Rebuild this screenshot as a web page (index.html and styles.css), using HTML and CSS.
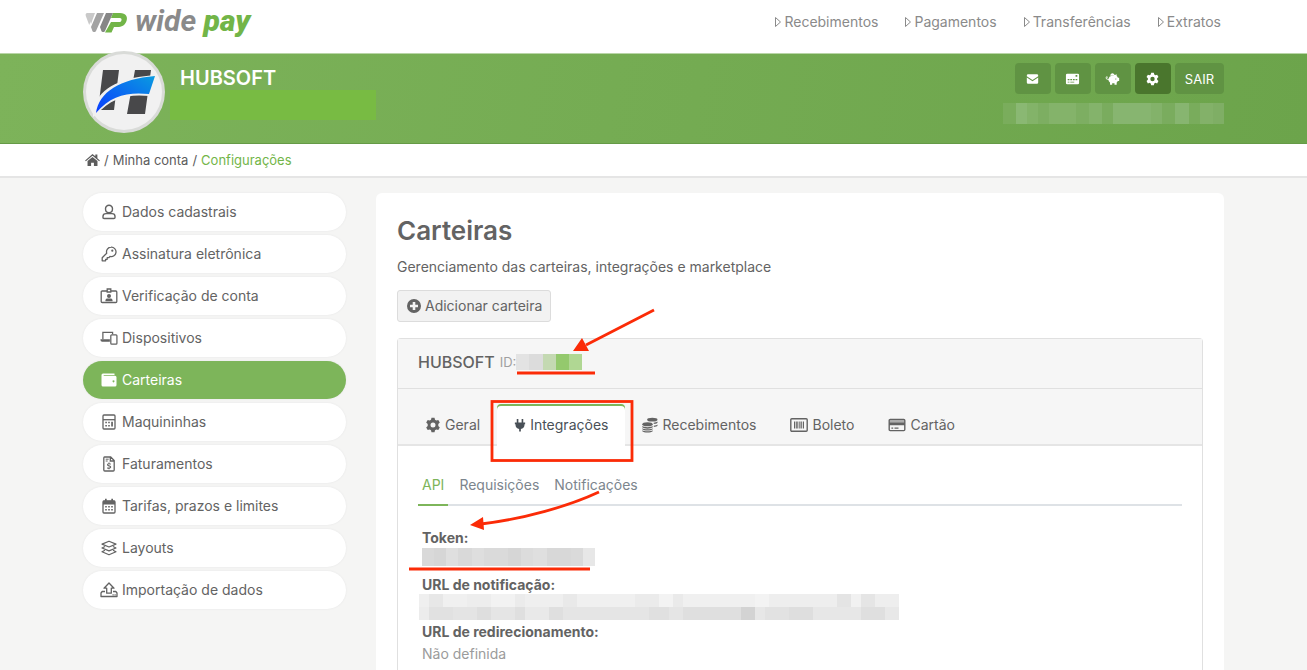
FILE: index.html
```html
<!DOCTYPE html>
<html lang="pt-BR">
<head>
<meta charset="utf-8">
<title>Wide Pay - Carteiras</title>
<meta name="viewport" content="width=device-width, initial-scale=1">
<link rel="stylesheet" href="styles.css">
</head>
<body>
<svg class="sprite" aria-hidden="true">
  <symbol id="play" viewBox="0 0 8 12"><path d="M1.500 1.500v9L6.500 6z" fill="none" stroke="currentColor" stroke-width="1"/></symbol>
  <symbol id="gear" viewBox="0 0 16 16"><path fill="currentColor" fill-rule="evenodd" d="M6.500.8h3l.5 2 1.300.8 2-.6 1.500 2.600-1.500 1.500v1.800l1.500 1.500-1.500 2.600-2-.6-1.300.8-.5 2h-3l-.5-2-1.300-.8-2 .6L1.200 10.400l1.500-1.500V7.100L1.200 5.600 2.700 3l2 .6L6 2.800zM8 5.500a2.500 2.500 0 1 0 0 5 2.500 2.500 0 0 0 0-5z"/></symbol>
  <symbol id="mail" viewBox="0 0 16 16"><path fill="currentColor" d="M3 2.500h10A1.500 1.500 0 0 1 14.500 4v.8L8 9 1.500 4.800V4A1.500 1.500 0 0 1 3 2.500zM1.500 6.300 8 10.500l6.500-4.200V12a1.500 1.500 0 0 1-1.500 1.500H3A1.500 1.500 0 0 1 1.500 12z"/></symbol>
  <symbol id="check" viewBox="0 0 16 16"><path fill="currentColor" fill-rule="evenodd" d="M2 2h12a1.500 1.500 0 0 1 1.500 1.500v9A1.500 1.500 0 0 1 14 14H2a1.500 1.500 0 0 1-1.500-1.500v-9A1.500 1.500 0 0 1 2 2zm9.500 1.500v2h2v-2zM2.500 8v1.500h2V8zm3 0v1.500h2V8zm3 0v1.500h2V8zm3 0v1.500h2V8zm-9 3v1h2v-1zm3 0v1H10v-1z"/></symbol>
  <symbol id="piggy" viewBox="0 0 18 16"><path fill="currentColor" fill-rule="evenodd" d="M6.500 2.800a2.500 2.500 0 0 1 4.800 0L12 3.200l2-.9v2.200c.7.500 1.200 1.200 1.500 2H17v4h-1.600c-.3.600-.8 1.200-1.400 1.600V15h-2.600v-2H8.600v2H6v-2.700A5 5 0 0 1 4 9C2 9 .8 8 .8 6.600.8 5.500 1.500 5 2.200 5c.8 0 1.300.6 1.100 1.500l-.7-.1c0-.4-.2-.6-.5-.6s-.5.300-.5.800c0 .9.900 1.400 2.500 1.400A5 5 0 0 1 8 4h2.800c-.6-.4-3.300-.4-4.300.3zM13 7.300a.7.700 0 1 0 .02 0z"/></symbol>
  <symbol id="home" viewBox="0 0 16 14"><path fill="currentColor" d="M8 .5l3 2.600V1.200h2.200v3.900L15.900 7.400l-.8 1L8 2.400l-7.100 6-.8-1zM8 3.700L13.300 8v5.500H9.500V9.800h-3v3.700H2.700V8z"/></symbol>
  <symbol id="user" viewBox="0 0 16 16"><g fill="none" stroke="currentColor" stroke-width="1.400"><path d="M8 1.300a3.500 3.500 0 0 1 3.500 3.500c0 2.200-1.500 3.900-3.500 3.900S4.500 7 4.500 4.800A3.500 3.500 0 0 1 8 1.300z"/><path d="M5 9.600h6c1.700 0 3 1.200 3 2.700v1.100c0 .7-.4 1.100-1.100 1.100H3.100c-.7 0-1.100-.4-1.100-1.100v-1.100c0-1.500 1.300-2.700 3-2.700z"/></g></symbol>
  <symbol id="key" viewBox="0 0 16 16"><path fill="none" stroke="currentColor" stroke-width="1.300" stroke-linejoin="round" d="M10 1.200a4.700 4.700 0 1 1-1 9.200l-1.200 1.300H6.200v1.600H4.600v1.500H1.200v-3.100l4.500-4.500A4.700 4.700 0 0 1 10 1.200z"/><circle cx="11.300" cy="4.700" r="1.100" fill="currentColor"/></symbol>
  <symbol id="badge" viewBox="0 0 18 16"><path fill="none" stroke="currentColor" stroke-width="1.300" d="M7 3H2.200c-.6 0-1 .4-1 1v9.500c0 .6.400 1 1 1h13.600c.6 0 1-.4 1-1V4c0-.6-.4-1-1-1H11M7.200 1h3.600v3H7.200z"/><circle cx="9" cy="8" r="2" fill="currentColor"/><path fill="currentColor" d="M5.500 13.300v-1.100c0-1.100.9-1.700 2-1.700h3c1.100 0 2 .6 2 1.700v1.100z"/></symbol>
  <symbol id="devices" viewBox="0 0 20 16"><g fill="none" stroke="currentColor" stroke-width="1.400"><path d="M3.200 9.500V1.700H14v2"/><rect x="12" y="4.600" width="6.800" height="10.200" rx="1"/></g><path fill="currentColor" d="M.5 9.500H11v2.800H2.500a2 2 0 0 1-2-2z"/></symbol>
  <symbol id="wallet" viewBox="0 0 16 16"><path fill="currentColor" fill-rule="evenodd" d="M2 1.500h11.500V3H2.700v.8H14a1.500 1.500 0 0 1 1.500 1.500V13a1.500 1.500 0 0 1-1.500 1.500H2A1.500 1.500 0 0 1 .5 13V3A1.500 1.500 0 0 1 2 1.500zm10.500 6.700a1 1 0 1 0 .02 0z"/></symbol>
  <symbol id="calc" viewBox="0 0 16 16"><rect x="2" y="1" width="12" height="14" rx="1" fill="none" stroke="currentColor" stroke-width="1.300"/><path d="M2 5.700h12" stroke="currentColor" stroke-width="1.300"/><path fill="currentColor" d="M4.300 7.700h1.600v1.600H4.300zM7.200 7.700h1.600v1.600H7.200zM4.300 11h1.600v1.600H4.300zM7.200 11h1.600v1.600H7.200zM10.200 7.700h1.700v4.900h-1.700z"/></symbol>
  <symbol id="invoice" viewBox="0 0 16 16"><path fill="none" stroke="currentColor" stroke-width="1.300" d="M3.500 1h6.200L13.200 4.500V14c0 .6-.3 1-1 1H3.800c-.6 0-1-.4-1-1V2c0-.6.100-1 .7-1zM9.300 1v4h4"/><path d="M4.700 3.200h3M4.700 5h2" stroke="currentColor" stroke-width="1"/><path fill="none" stroke="currentColor" stroke-width="1.100" d="M9.700 8.200C9 7.700 6.500 7.500 6.500 8.800c0 1.300 3.200.8 3.200 2.300 0 1.300-2.500 1.300-3.400.6M8 6.500v1M8 12.200v1"/></symbol>
  <symbol id="calendar" viewBox="0 0 16 16"><rect x="2" y="3" width="12" height="12" rx="1" fill="none" stroke="currentColor" stroke-width="1.300"/><path fill="currentColor" d="M2 2.800h12v3.600H2zM4 .7h1.700V3H4zM10.300.7H12V3h-1.700zM4.200 8h1.600v1.500H4.200zM7.200 8h1.600v1.500H7.200zM10.200 8h1.600v1.500h-1.600zM4.200 11h1.600v1.500H4.200zM7.200 11h1.600v1.500H7.200zM10.200 11h1.600v1.500h-1.600z"/></symbol>
  <symbol id="layers" viewBox="0 0 16 16"><g fill="none" stroke="currentColor" stroke-width="1.200" stroke-linejoin="round"><path d="M8 1.200l7 2.900-7 2.900-7-2.900z"/><path d="M4 6.500L1 8l7 2.900L15 8l-3-1.500"/><path d="M4 10.300l-3 1.500 7 3 7-3-3-1.500"/></g></symbol>
  <symbol id="upload" viewBox="0 0 18 16"><g fill="none" stroke="currentColor" stroke-width="1.300" stroke-linejoin="round"><path d="M9 1l5 5.200h-2.700v5H6.700v-5H4z"/><path d="M5 9.500H2.200L1 11v3.500h16V11l-1.200-1.500H13"/></g><path fill="currentColor" d="M12.500 12.300h1.200v1.200h-1.200zM14.500 12.300h1.200v1.200h-1.200z"/></symbol>
  <symbol id="plus" viewBox="0 0 16 16"><path fill="currentColor" fill-rule="evenodd" d="M8 1a7 7 0 1 1 0 14A7 7 0 0 1 8 1zM6.700 4v2.700H4v2.600h2.700V12h2.600V9.300H12V6.700H9.300V4z"/></symbol>
  <symbol id="plug" viewBox="0 0 14 16"><path fill="currentColor" d="M3.200 1h1.900v4H3.200zM8.900 1h1.900v4H8.900zM1 5.200h12V7h-.8v1.300A5 5 0 0 1 8 12.700V15.500H6v-2.800a5 5 0 0 1-4.200-4.400V7H1z"/></symbol>
  <symbol id="coins" viewBox="0 0 16 16"><g fill="currentColor"><ellipse cx="10.300" cy="2.700" rx="5.200" ry="1.900"/><ellipse cx="5.500" cy="7.200" rx="5.200" ry="2"/><path d="M.3 9c1.500 1.500 9 1.500 10.400 0v1.300c-1.500 1.800-9 1.800-10.400 0zM.3 11.200c1.500 1.500 9 1.500 10.400 0v1c-1.500 1.700-9 1.700-10.400 0zM.3 13.200c1.500 1.500 9 1.500 10.400 0v1c-1.500 1.700-9 1.700-10.400 0zM11.600 5.700c1.700 0 3-.4 3.900-1.100v1.100c-.6.800-2 1.200-3.700 1.200zM11.800 8.700c1.700-.1 3-.5 3.700-1.100v1.200c-.6.700-2 1.100-3.700 1.200z"/></g></symbol>
  <symbol id="barcode" viewBox="0 0 18 16"><rect x=".8" y="1.800" width="16.400" height="12.400" rx="1" fill="none" stroke="currentColor" stroke-width="1.400"/><path fill="currentColor" d="M4 4.500h1.300v7H4zM6.200 4.500h1.500v7H6.200zM8.700 4.500h1v7h-1zM10.500 4.500h1.300v7h-1.300zM12.800 4.500H14v7h-1.200z"/></symbol>
  <symbol id="card" viewBox="0 0 18 16"><rect x="1.200" y="2.400" width="15.600" height="11.200" rx="1" fill="none" stroke="currentColor" stroke-width="1.400"/><path fill="currentColor" opacity=".5" d="M1.500 2.800h15v3h-15z"/><path fill="currentColor" d="M1 5.500h16v2.700H1zM3.400 10.600h1.800v1.100H3.400zM6.500 10.600h4v1.100h-4z"/></symbol>
</svg>

<header class="topbar">
  <div class="container topbar-row">
    <a class="brand" href="#" aria-label="wide pay">
      <svg class="brand-mark" viewBox="0 0 43 22" aria-hidden="true">
        <path fill="#c9c9c9" d="M3 1h7L6 12z"/><path fill="#c9c9c9" d="M3 1C0 1 .5 3 1 4.500L4.200 13 8 4z"/>
        <path fill="#a3a3a3" d="M12 1h7l-8 18c-.6 1.400-3 1.400-3.600 0L6 15z"/>
        <path fill="#868686" d="M21 1h7l-8 18c-.6 1.400-3 1.400-3.600 0L15 15z"/>
        <path fill="#72b548" d="M28 1h7c6 0 8 4 6.500 8-1.500 4.500-5 6-9 6h-3.500l-2.500 5.500H20L26 10h8c1.500 0 2-.6 2.400-1.600.5-1.400 0-2.400-1.700-2.400H26z"/>
      </svg>
      <span class="brand-name">wide <b>pay</b></span>
    </a>
    <nav class="topnav">
      <a href="#"><svg class="tri"><use href="#play"/></svg>Recebimentos</a>
      <a href="#"><svg class="tri"><use href="#play"/></svg>Pagamentos</a>
      <a href="#"><svg class="tri"><use href="#play"/></svg>Transferências</a>
      <a href="#"><svg class="tri"><use href="#play"/></svg>Extratos</a>
    </nav>
  </div>
</header>

<section class="hero">
  <div class="container hero-row">
    <svg class="avatar" viewBox="0 0 82 82" role="img" aria-label="Hubsoft">
      <defs><linearGradient id="sw" x1="0" y1="1" x2="1" y2="0"><stop offset="0" stop-color="#0a3cff"/><stop offset="1" stop-color="#0a9be0"/></linearGradient></defs>
      <circle cx="41" cy="41" r="41" fill="#d9dbd8"/><circle cx="41" cy="41" r="38" fill="#f1f1f1"/>
      <path fill="#48484a" d="M20 19h16l-5 40H15zM52 19h16l-6 44H44z"/>
      <path fill="#f1f1f1" d="M10 66V56C19 36 38 26 74 24l-7 21c-22-2-38 1-54 19z"/>
      <path fill="url(#sw)" d="M13 62c3-21 24-34 59-37l-6 18c-21-2-38 1-53 19z"/>
    </svg>
    <div class="account">
      <h2>HUBSOFT</h2>
      <div class="account-mask"></div>
    </div>
    <div class="hero-side">
      <div class="tools">
        <button type="button" aria-label="Mensagens"><svg class="tool-icon"><use href="#mail"/></svg></button>
        <button type="button" aria-label="Cobranças"><svg class="tool-icon"><use href="#check"/></svg></button>
        <button type="button" aria-label="Carteira"><svg class="tool-icon"><use href="#piggy"/></svg></button>
        <button type="button" class="on" aria-label="Configurações"><svg class="tool-icon"><use href="#gear"/></svg></button>
        <button type="button">SAIR</button>
      </div>
      <div class="login-mask"></div>
    </div>
  </div>
</section>

<nav class="crumbs">
  <div class="container crumbs-row">
    <a href="#" aria-label="Início"><svg class="home"><use href="#home"/></svg></a><span>/</span><a href="#">Minha conta</a><span>/</span><span class="here">Configurações</span>
  </div>
</nav>

<div class="container page">
  <aside class="side">
    <a href="#"><svg class="icon"><use href="#user"/></svg>Dados cadastrais</a>
    <a href="#"><svg class="icon"><use href="#key"/></svg>Assinatura eletrônica</a>
    <a href="#"><svg class="icon"><use href="#badge"/></svg>Verificação de conta</a>
    <a href="#"><svg class="icon"><use href="#devices"/></svg>Dispositivos</a>
    <a href="#" class="on"><svg class="icon"><use href="#wallet"/></svg>Carteiras</a>
    <a href="#"><svg class="icon"><use href="#calc"/></svg>Maquininhas</a>
    <a href="#"><svg class="icon"><use href="#invoice"/></svg>Faturamentos</a>
    <a href="#"><svg class="icon"><use href="#calendar"/></svg>Tarifas, prazos e limites</a>
    <a href="#"><svg class="icon"><use href="#layers"/></svg>Layouts</a>
    <a href="#"><svg class="icon"><use href="#upload"/></svg>Importação de dados</a>
  </aside>

  <main class="panel">
    <h1>Carteiras</h1>
    <p class="lead">Gerenciamento das carteiras, integrações e marketplace</p>
    <button type="button" class="add"><svg class="icon-sm"><use href="#plus"/></svg>Adicionar carteira</button>

    <section class="wallet">
      <header class="wallet-head">
        <h3>HUBSOFT</h3><span class="wallet-id">ID:</span><span class="id-mask"></span>
      </header>
      <nav class="tabs">
        <a href="#"><svg class="icon-sm"><use href="#gear"/></svg>Geral</a>
        <a href="#" class="on"><svg class="icon-plug"><use href="#plug"/></svg>Integrações</a>
        <a href="#"><svg class="icon-sm"><use href="#coins"/></svg>Recebimentos</a>
        <a href="#"><svg class="icon"><use href="#barcode"/></svg>Boleto</a>
        <a href="#"><svg class="icon"><use href="#card"/></svg>Cartão</a>
      </nav>
      <div class="wallet-body">
        <nav class="subtabs">
          <a href="#" class="on">API</a>
          <a href="#">Requisições</a>
          <a href="#">Notificações</a>
        </nav>
        <dl class="fields">
          <dt>Token:</dt>
          <dd class="token-mask"></dd>
          <dt>URL de notificação:</dt>
          <dd class="url-mask"></dd>
          <dt>URL de redirecionamento:</dt>
          <dd class="empty">Não definida</dd>
        </dl>
      </div>
    </section>

    <svg class="marks" viewBox="0 0 280 400" aria-hidden="true">
      <g fill="none" stroke="#fb2b07" stroke-width="2.800">
        <path d="M278 117L210 152M141 180h78M33 376h181"/>
        <rect x="116" y="208.500" width="140" height="59"/>
        <path d="M223 299c-30 14-75 27-118 32"/>
      </g>
      <path fill="#fb2b07" d="M197 158l9-13 7 13zM94 332l13-8 1 13z"/>
    </svg>
  </main>
</div>
</body>
</html>
```
FILE: styles.css
```css
* { box-sizing: border-box; }

body {
  margin: 0;
  min-height: 100vh;
  display: flex;
  flex-direction: column;
  background: #f5f5f4;
  color: #636363;
  font: 14px/20px Inter, "Liberation Sans", sans-serif;
}

a { color: inherit; text-decoration: none; }
h1, h2, h3, p, dl, dd { margin: 0; }
button { font: inherit; color: inherit; cursor: pointer; }
svg { flex: none; }
.sprite { position: absolute; width: 0; height: 0; }

.container {
  width: 100%;
  max-width: 1141px;
  margin: 0 auto;
}

/* Top bar */
.topbar { background: #fff; }
.topbar-row {
  display: flex;
  justify-content: space-between;
  align-items: flex-start;
  height: 53px;
}
.brand { display: flex; gap: 7px; padding: 4px 0 0 2px; }
.brand-mark { width: 43px; height: 22px; margin-top: 8px; }
.brand-name {
  font: italic 700 30px/34px Roboto, sans-serif;
  color: #8a8a8a;
}
.brand-name b { color: #72b548; }
.topnav { display: flex; gap: 26px; padding: 12px 3px 0 0; color: #8a8a8a; }
.topnav a { display: flex; align-items: center; gap: 2px; }
.tri { width: 8px; height: 12px; }

/* Account banner */
.hero {
  background: linear-gradient(100deg, #7db35a, #6ca44b);
  border-top: 1px solid #b9d5a7;
  border-bottom: 1px solid #659a46;
}
.hero-row { display: flex; align-items: flex-start; height: 89px; }
.avatar { width: 82px; height: 82px; margin-top: -3px; }
.account { padding-left: 5px; flex: 1; }
.account h2 {
  padding: 13px 0 0 10px;
  font-size: 20px;
  line-height: 23px;
  font-weight: 600;
  color: #fff;
}
.account-mask { width: 206px; height: 30px; background: #78bb43; }
.hero-side { display: flex; flex-direction: column; align-items: flex-end; }
.tools { display: flex; gap: 4px; padding-top: 9px; }
.tools button {
  display: flex;
  align-items: center;
  justify-content: center;
  min-width: 36px;
  height: 31px;
  padding: 0 10px;
  border: 0;
  border-radius: 4px;
  background: #609343;
  color: #fff;
  font-size: 13px;
}
.tools .on { background: #4a762d; }
.tool-icon { width: 15px; height: 14px; }
.login-mask {
  width: 221px;
  height: 21px;
  margin-top: 9px;
  background: linear-gradient(90deg, #7aad5c 6%, #8ab873 6% 11%, #83b369 11% 16%, #7dae62 16% 21%, #84b36a 21% 33%, #7dae62 33% 39%, #84b36b 39% 45%, #7aac5e 45% 50%, #87b570 50% 67%, #83b26a 67% 72%, #7aac5e 72% 78%, #87b570 78% 84%, #79ac5c 84% 89%, #83b169 89% 95%, #7fae65 95%);
}

/* Breadcrumbs */
.crumbs { background: #fff; border-bottom: 2px solid #e5e5e5; }
.crumbs-row {
  display: flex;
  align-items: center;
  gap: 4px;
  height: 32px;
  padding-left: 2px;
  font-size: 13px;
  color: #5c5c5c;
}
.home { display: block; width: 15px; height: 14px; }
.here { color: #72b548; }

/* Page columns */
.page {
  flex: 1;
  display: grid;
  grid-template-columns: 263px minmax(0, 1fr);
  gap: 30px;
  padding-top: 15px;
}
.side { display: flex; flex-direction: column; gap: 4px; }
.side a {
  display: flex;
  align-items: center;
  gap: 4px;
  height: 38px;
  padding-left: 17px;
  border-radius: 19px;
  background: #fff;
  box-shadow: 0 0 2px #e4e4e4;
}
.side .on { background: #7db55a; color: #fff; }
.icon { width: 18px; height: 16px; }
.icon-sm { width: 16px; height: 16px; }
.icon-plug { width: 12px; height: 16px; }

/* Main panel */
.panel {
  position: relative;
  padding: 21px 21px 0;
  border-radius: 6px 6px 0 0;
  background: #fff;
  display: flex;
  flex-direction: column;
  align-items: flex-start;
}
h1 { font-size: 26px; line-height: 34px; font-weight: 600; }
.lead { margin-top: 9px; }
.add {
  display: flex;
  align-items: center;
  gap: 3px;
  height: 32px;
  margin-top: 13px;
  padding: 0 8px;
  border: 1px solid #dcdcdc;
  border-radius: 3px;
  background: #f2f2f2;
}

/* Wallet card */
.wallet {
  flex: 1;
  align-self: stretch;
  display: flex;
  flex-direction: column;
  margin-top: 16px;
  border: 1px solid #e0e0e0;
  border-bottom: 0;
  border-radius: 4px 4px 0 0;
  background: #fff;
}
.wallet-head {
  display: flex;
  align-items: center;
  height: 50px;
  padding: 0 20px 3px;
  background: #f6f6f6;
  border-bottom: 1px solid #e0e0e0;
}
.wallet-head h3 { font-size: 16px; font-weight: 500; margin-right: 5px; }
.wallet-id { font-size: 13px; color: #a0a0a0; }
.id-mask {
  width: 66px;
  height: 16px;
  background: linear-gradient(90deg, #e3e3e3 20%, #dcdcdc 20% 41%, #c4d9b2 41% 60%, #94c96d 60% 80%, #b0d793 80%);
}
.tabs {
  display: flex;
  height: 57px;
  padding: 15px 10px 0;
  background: #f6f6f6;
  box-shadow: inset 0 -2px #e5e5e5;
}
.tabs a {
  display: flex;
  align-items: center;
  gap: 4px;
  padding: 0 17px;
}
.tabs .on {
  border-radius: 4px 4px 0 0;
  background: #fff;
  box-shadow: inset 0 2px #7db55a;
  color: #495057;
}
.wallet-body { flex: 1; padding: 28px 20px 4px; }
.subtabs {
  display: flex;
  gap: 7px;
  border-bottom: 2px solid #dee2e6;
  color: #7c858d;
}
.subtabs a { height: 32px; margin-bottom: -2px; padding: 1px 4px 0; }
.subtabs .on { color: #7db55a; border-bottom: 2px solid #7db55a; }
.fields { padding: 23px 4px 0; }
.fields dt { font-weight: 700; line-height: 18px; }
.token-mask {
  width: 173px;
  height: 18px;
  margin: 1px 0 10px;
  background: linear-gradient(90deg, #d9d9d9 7%, #d6d6d6 7% 14%, #dfdfdf 14% 21%, #d9d9d9 21% 29%, #dedede 29% 36%, #dadada 36% 50%, #d6d6d6 50% 57%, #dcdcdc 57% 64%, #dfdfdf 64% 72%, #d8d8d8 72% 86%, #dadada 86% 93%, #e7e7e7 93%);
}
.url-mask {
  max-width: 480px;
  height: 26px;
  margin: 0 0 3px -3px;
  background:
    linear-gradient(90deg, #efefef 2%, #e7e7e7 2% 5%, #f0f0f0 5% 10%, #ededed 10% 15%, #f2f2f2 15% 20%, #ebebeb 20% 22%, #efefef 22% 30%, #e9e9e9 30% 33%, #f0f0f0 33% 45%, #ebebeb 45% 50%, #f3f3f3 50% 53%, #eaeaea 53% 55%, #f0f0f0 55% 70%, #f3f3f3 70% 73%, #eeeeee 73% 87%, #e4e4e4 87% 90%, #f1f1f1 90% 92%, #e5e5e5 92% 95%, #eeeeee 95%) top / 100% 13px no-repeat,
    linear-gradient(90deg, #ececec 2%, #e1e1e1 2% 7%, #e4e4e4 7% 12%, #dedede 12% 15%, #e5e5e5 15% 20%, #dfdfdf 20% 22%, #e9e9e9 22% 27%, #dfdfdf 27% 30%, #e5e5e5 30% 48%, #e0e0e0 48% 52%, #e5e5e5 52% 55%, #dfdfdf 55% 67%, #d3d3d3 67% 70%, #e7e7e7 70% 72%, #e2e2e2 72% 77%, #dedede 77% 82%, #e7e7e7 82% 92%, #dfdfdf 92% 97%, #e8e8e8 97%) bottom / 100% 13px no-repeat;
}
.empty { padding-top: 3px; color: #9b9b9b; }

/* Red annotations drawn over the panel */
.marks {
  position: absolute;
  left: 0;
  top: 0;
  width: 280px;
  height: 400px;
  pointer-events: none;
}
```
